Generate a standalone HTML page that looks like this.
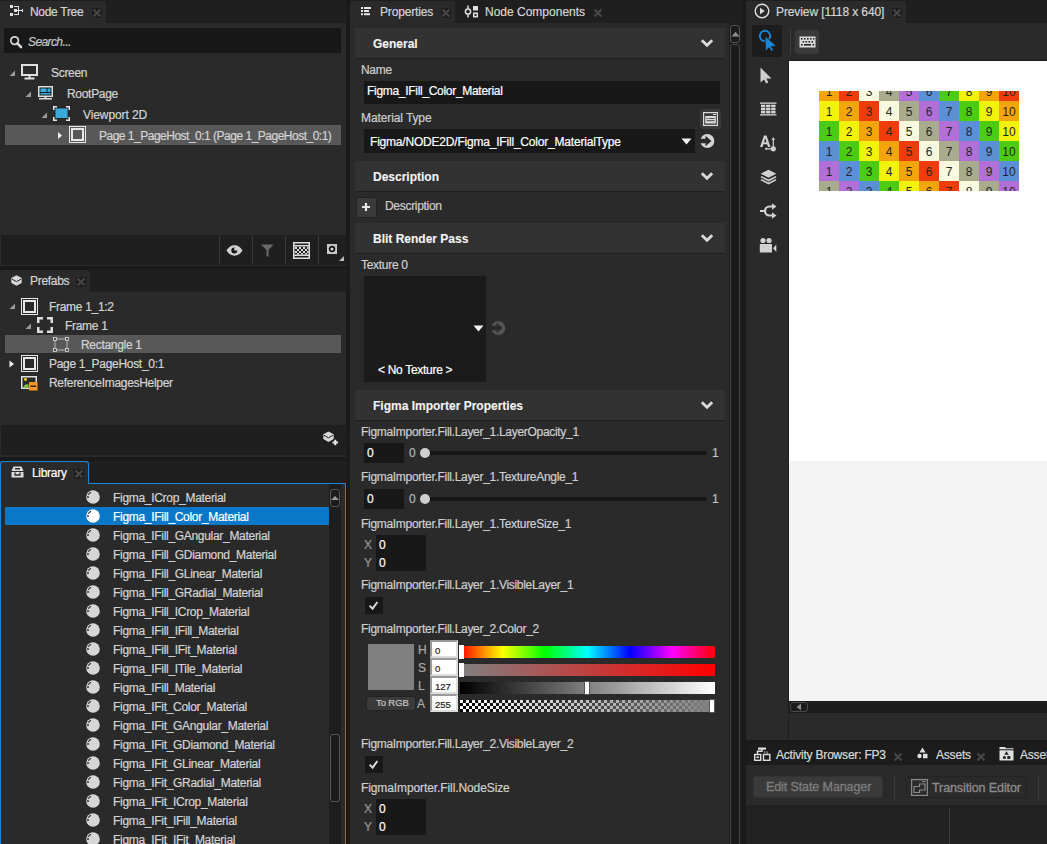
<!DOCTYPE html>
<html><head><meta charset="utf-8">
<style>
*{box-sizing:border-box;margin:0;padding:0}
html,body{width:1047px;height:844px;overflow:hidden;background:#1a1a1a;font-family:"Liberation Sans",sans-serif;font-size:12px;color:#d4d4d4;letter-spacing:-0.3px}
.a{position:absolute}
.t{position:absolute;white-space:pre;line-height:14px;-webkit-text-stroke:0.2px currentColor}
.strip{position:absolute;background:#1f1f1f}
.panel{position:absolute;background:#2a2a2a}
.tab{position:absolute;background:#2a2a2a;border-radius:3px 3px 0 0}
.x{position:absolute;width:10px;height:10px;background:#1e1e1e}
.x:before,.x:after{content:"";position:absolute;left:0px;top:4px;width:10px;height:2.2px;background:#474747;transform:rotate(45deg)}
.x:after{transform:rotate(-45deg)}
.sel{position:absolute;background:#585858}
.hdr{position:absolute;left:5px;width:370px;height:31px;background:#323232;border-bottom:1px solid #1f1f1f}
.hdr .t{left:18px;top:9px;font-weight:bold;color:#f4f4f4;font-size:12px;letter-spacing:0;-webkit-text-stroke:0.1px currentColor}
.chev{position:absolute;right:11px;top:10px;overflow:visible;width:14px;height:9px}
.lbl{position:absolute;white-space:pre;line-height:14px;color:#cfcfcf;left:11px;-webkit-text-stroke:0.2px currentColor}
.inp{position:absolute;background:#181818}
.val{position:absolute;white-space:pre;line-height:14px;color:#fff;-webkit-text-stroke:0.2px currentColor}
.tri{position:absolute;width:0;height:0}
.grid{position:absolute;left:819px;top:91px;width:200px;height:100px;overflow:hidden}
.cell{position:absolute;width:20px;height:20px;text-align:center;font-size:12px;line-height:20px;padding-top:1px;color:#262620;letter-spacing:0}
.lib .t{left:113px;color:#d4d4d4}
.ball{position:absolute;left:85px;width:15px;height:15px;border-radius:50%;background:#d6d6d6}
.ball:after{content:"";position:absolute;left:2px;top:3px;width:4px;height:6px;border-left:1px solid #333;border-radius:50% 0 0 50%}
</style></head><body>

<!-- ============ NODE TREE ============ -->
<div class="strip" style="left:0;top:0;width:346px;height:23px"></div>
<div class="tab" style="left:0;top:1px;width:106px;height:22px"></div>
<div class="panel" style="left:0;top:23px;width:346px;height:243px"></div>
<div class="a" style="left:4px;top:28px;width:337px;height:25px;background:#181818"></div>
<div class="t" style="left:28px;top:35px;font-style:italic;color:#c8c8c8;letter-spacing:-0.6px">Search...</div>
<div class="t" style="left:30px;top:5px;color:#d4d4d4">Node Tree</div>
<div class="x" style="left:92px;top:8px"></div>

<div class="sel" style="left:5px;top:125px;width:336px;height:20px"></div>
<div class="t" style="left:51px;top:66px">Screen</div>
<div class="t" style="left:67px;top:87px">RootPage</div>
<div class="t" style="left:83px;top:108px;letter-spacing:-0.1px">Viewport 2D</div>
<div class="t" style="left:99px;top:129px;letter-spacing:-0.5px">Page 1_PageHost_0:1 (Page 1_PageHost_0:1)</div>

<div class="a" style="left:1px;top:235px;width:345px;height:30px;background:#1f1f1f"></div>
<!-- node tree icons -->
<svg class="a" style="left:9px;top:4px" width="16" height="15" viewBox="0 0 16 15"><g fill="#e0e0e0"><rect x="1" y="1" width="3" height="3"/><rect x="5" y="5" width="3" height="3"/><rect x="1" y="9" width="3" height="3"/><path d="M5 2h5v4h3v-1h1v3h-1v-1h-3v4h-5v-1h4v-3h-1v-1h1v-3h-4z"/></g></svg>
<svg class="a" style="left:9px;top:35px" width="14" height="14" viewBox="0 0 14 14"><circle cx="5.6" cy="5.6" r="3.8" fill="none" stroke="#d8d8d8" stroke-width="1.7"/><path d="M8.3 8.3L12 12" stroke="#d8d8d8" stroke-width="2.6" stroke-linecap="round"/></svg>
<svg class="a" style="left:9px;top:70px" width="7" height="7" viewBox="0 0 7 7"><path d="M6 0.5V6H0.5z" fill="#9a9a9a"/></svg>
<svg class="a" style="left:21px;top:64px" width="17" height="16" viewBox="0 0 17 16"><rect x="1" y="1" width="15" height="10" fill="none" stroke="#e0e0e0" stroke-width="2"/><rect x="7.5" y="11" width="2" height="3" fill="#e0e0e0"/><rect x="3.5" y="13.5" width="10" height="2" fill="#e0e0e0"/></svg>
<svg class="a" style="left:25px;top:91px" width="7" height="7" viewBox="0 0 7 7"><path d="M6 0.5V6H0.5z" fill="#9a9a9a"/></svg>
<svg class="a" style="left:38px;top:86px" width="15" height="14" viewBox="0 0 15 14"><rect x="0.75" y="0.75" width="13.5" height="9.5" fill="#181818" stroke="#e0e0e0" stroke-width="1.5"/><rect x="2.5" y="2.5" width="6" height="3.5" fill="#3ab0e2"/><rect x="9.5" y="2.5" width="3" height="3.5" fill="#3ab0e2"/><rect x="2.5" y="7" width="10" height="1.5" fill="#3ab0e2"/><rect x="6.5" y="10" width="2" height="2" fill="#e0e0e0"/><rect x="1" y="12" width="13" height="1.5" fill="#e0e0e0"/></svg>
<svg class="a" style="left:41px;top:112px" width="7" height="7" viewBox="0 0 7 7"><path d="M6 0.5V6H0.5z" fill="#9a9a9a"/></svg>
<svg class="a" style="left:53px;top:106px" width="17" height="15" viewBox="0 0 17 15"><rect x="2" y="2" width="13" height="10.5" fill="#3aaad8" stroke="#1a1a1a" stroke-width="0.8"/><path d="M0.75 4V0.75H4M13 0.75H16.25V4M16.25 11V14.25H13M4 14.25H0.75V11" fill="none" stroke="#e8e8e8" stroke-width="1.5"/></svg>
<svg class="a" style="left:57px;top:131px" width="6" height="9" viewBox="0 0 6 9"><path d="M1 1V8L5 4.5z" fill="#f0f0f0"/></svg>
<svg class="a" style="left:69px;top:126px" width="17" height="17" viewBox="0 0 17 17"><rect x="0.5" y="0.5" width="16" height="16" fill="none" stroke="#e8e8e8" stroke-width="1"/><rect x="3" y="3" width="11" height="11" fill="none" stroke="#e8e8e8" stroke-width="2"/></svg>
<!-- toolbar -->
<div class="a" style="left:219px;top:236px;width:1px;height:28px;background:#3a3a3a"></div>
<div class="a" style="left:252px;top:236px;width:1px;height:28px;background:#3a3a3a"></div>
<div class="a" style="left:285px;top:236px;width:1px;height:28px;background:#3a3a3a"></div>
<div class="a" style="left:318px;top:236px;width:1px;height:28px;background:#3a3a3a"></div>
<svg class="a" style="left:225.5px;top:244.5px" width="17" height="11" viewBox="0 0 17 11"><path d="M0.5 5.5C3 1.5 6 0.3 8.5 0.3S14 1.5 16.5 5.5C14 9.5 11 10.7 8.5 10.7S3 9.5 0.5 5.5z" fill="#d0d0d0"/><circle cx="8.3" cy="5.6" r="3" fill="#161616"/><path d="M8.3 5.6V2.2A3.4 3.4 0 0 1 11.7 5.6z" fill="#d0d0d0"/></svg>
<svg class="a" style="left:261px;top:244px" width="13" height="13" viewBox="0 0 13 13"><path d="M0 0.5H12.5L7.5 6V12.5H5.5V6z" fill="#6a6a6a"/></svg>
<svg class="a" style="left:293px;top:242px" width="17" height="17" viewBox="0 0 17 17"><rect x="0.75" y="0.75" width="15.5" height="15.5" fill="none" stroke="#dcdcdc" stroke-width="1.5"/><rect x="1" y="3" width="15" height="1.5" fill="#dcdcdc"/><rect x="1" y="12.5" width="15" height="1.5" fill="#dcdcdc"/><g fill="#dcdcdc"><rect x="2" y="5" width="2" height="2"/><rect x="6" y="5" width="2" height="2"/><rect x="10" y="5" width="2" height="2"/><rect x="14" y="5" width="1.5" height="2"/><rect x="4" y="7" width="2" height="2"/><rect x="8" y="7" width="2" height="2"/><rect x="12" y="7" width="2" height="2"/><rect x="2" y="9" width="2" height="2"/><rect x="6" y="9" width="2" height="2"/><rect x="10" y="9" width="2" height="2"/><rect x="14" y="9" width="1.5" height="2"/><rect x="4" y="11" width="2" height="1.5"/><rect x="8" y="11" width="2" height="1.5"/><rect x="12" y="11" width="2" height="1.5"/></g></svg>
<svg class="a" style="left:327px;top:244px" width="10" height="10" viewBox="0 0 10 10"><rect x="0" y="0" width="10" height="10" fill="#dcdcdc"/><rect x="1" y="1" width="8" height="8" fill="none" stroke="#9a9a9a" stroke-width="0.6"/><circle cx="5" cy="5" r="2.4" fill="none" stroke="#111" stroke-width="1.7"/></svg>
<svg class="a" style="left:339px;top:256px" width="5" height="5" viewBox="0 0 5 5"><path d="M5 0V5H0z" fill="#bdbdbd"/></svg>


<!-- ============ PREFABS ============ -->
<div class="strip" style="left:0;top:270px;width:346px;height:22px"></div>
<div class="tab" style="left:0;top:270px;width:90px;height:22px"></div>
<div class="panel" style="left:0;top:292px;width:346px;height:165px"></div>
<div class="t" style="left:30px;top:274px">Prefabs</div>
<div class="x" style="left:76px;top:277px"></div>
<div class="sel" style="left:5px;top:335px;width:336px;height:18px"></div>
<div class="t" style="left:49px;top:300px">Frame 1_1:2</div>
<div class="t" style="left:65px;top:319px">Frame 1</div>
<div class="t" style="left:81px;top:338px">Rectangle 1</div>
<div class="t" style="left:49px;top:357px">Page 1_PageHost_0:1</div>
<div class="t" style="left:49px;top:376px">ReferenceImagesHelper</div>
<div class="a" style="left:1px;top:425px;width:345px;height:30px;background:#1f1f1f"></div>
<!-- prefabs icons -->
<svg class="a" style="left:11px;top:275px" width="11" height="11" viewBox="0 0 11 11"><path d="M5.5 0.3L10.7 3.1V7.9L5.5 10.7L0.3 7.9V3.1z" fill="#d8d8d8"/><path d="M0.8 4L5.5 6.6L10.2 4" fill="none" stroke="#2a2a2a" stroke-width="1"/></svg>
<svg class="a" style="left:9px;top:303px" width="7" height="7" viewBox="0 0 7 7"><path d="M6 0.5V6H0.5z" fill="#9a9a9a"/></svg>
<svg class="a" style="left:21px;top:298px" width="17" height="17" viewBox="0 0 17 17"><rect x="0.5" y="0.5" width="16" height="16" fill="none" stroke="#e8e8e8" stroke-width="1"/><rect x="3" y="3" width="11" height="11" fill="none" stroke="#e8e8e8" stroke-width="2"/></svg>
<svg class="a" style="left:25px;top:323px" width="7" height="7" viewBox="0 0 7 7"><path d="M6 0.5V6H0.5z" fill="#9a9a9a"/></svg>
<svg class="a" style="left:37px;top:317px" width="16" height="16" viewBox="0 0 16 16"><path d="M1.25 6V1.25H6M10 1.25H14.75V6M14.75 10V14.75H10M6 14.75H1.25V10" fill="none" stroke="#dcdcdc" stroke-width="2.5"/></svg>
<svg class="a" style="left:53px;top:337px" width="16" height="15" viewBox="0 0 16 15"><rect x="2" y="2" width="12" height="11" fill="none" stroke="#cfcfcf" stroke-width="0.8"/><g fill="#4a4a4a" stroke="#e0e0e0" stroke-width="0.8"><rect x="0.5" y="0.5" width="3" height="3"/><rect x="12.5" y="0.5" width="3" height="3"/><rect x="0.5" y="11.5" width="3" height="3"/><rect x="12.5" y="11.5" width="3" height="3"/></g></svg>
<svg class="a" style="left:9px;top:360px" width="6" height="8" viewBox="0 0 6 8"><path d="M0.5 0.5V7.5L5 4z" fill="#f0f0f0"/></svg>
<svg class="a" style="left:21px;top:355px" width="17" height="17" viewBox="0 0 17 17"><rect x="0.5" y="0.5" width="16" height="16" fill="none" stroke="#e8e8e8" stroke-width="1"/><rect x="3" y="3" width="11" height="11" fill="none" stroke="#e8e8e8" stroke-width="2"/></svg>
<svg class="a" style="left:21px;top:376px" width="17" height="15" viewBox="0 0 17 15"><path d="M8 12.25H0.75V0.75H15.25V6" fill="none" stroke="#e0e0e0" stroke-width="1.5"/><circle cx="4.5" cy="3.5" r="1.4" fill="#f2e020"/><path d="M2 11.5C3 9 5 7.5 7.5 8.5V11.5z" fill="#7ccb3a"/><rect x="8" y="6" width="8.5" height="8.5" fill="#f5962a"/><rect x="9.5" y="9.5" width="5.5" height="1.4" fill="#1a1a1a"/></svg>
<svg class="a" style="left:323px;top:431px" width="16" height="16" viewBox="0 0 16 16"><path d="M5.5 0.5L10.7 3.3V8.1L5.5 10.9L0.3 8.1V3.3z" fill="#d8d8d8"/><path d="M0.8 4.2L5.5 6.8L10.2 4.2" fill="none" stroke="#1f1f1f" stroke-width="1"/><path d="M9 11.5H15.5M12.25 8.25V14.75" stroke="#1f1f1f" stroke-width="3.5"/><path d="M9.5 11.5H15M12.25 8.75V14.25" stroke="#e8e8e8" stroke-width="2"/></svg>


<!-- ============ LIBRARY ============ -->
<div class="strip" style="left:0;top:461px;width:346px;height:22px"></div>
<div class="a" style="left:0;top:461px;width:89px;height:23px;background:#2a2a2a;border:1px solid #1a87d8;border-bottom:none;border-radius:3px 3px 0 0"></div>
<div class="a" style="left:0;top:483px;width:346px;height:362px;background:#2a2a2a;border:1px solid #1a87d8;border-top:none;border-bottom:none"></div>
<div class="a" style="left:88px;top:483px;width:258px;height:1px;background:#1a87d8"></div>

<svg class="a" style="left:11px;top:466px" width="13" height="12" viewBox="0 0 13 12"><path d="M2.5 0.5H10.5L12.5 5H0.5z" fill="#dcdcdc"/><rect x="4" y="2" width="5" height="1.5" fill="#2a2a2a"/><rect x="0.5" y="6" width="12" height="5.5" fill="#dcdcdc"/><path d="M4 6.5V9H9V6.5" fill="none" stroke="#2a2a2a" stroke-width="1.3"/></svg>
<div class="t" style="left:32px;top:466px;color:#fff">Library</div>
<div class="x" style="left:74px;top:469px"></div>

<div class="lib">
<div class="a" style="left:5px;top:507px;width:324px;height:18px;background:#0a78c8"></div>
<svg class="a" style="left:86px;top:490.0px" width="14" height="14" viewBox="0 0 14 14"><circle cx="7" cy="7" r="6.8" fill="#d6d6d6"/><path d="M5 2.2A5.2 5.2 0 0 0 2.3 4.8" fill="none" stroke="#222" stroke-width="1.1"/><circle cx="2" cy="7" r="0.9" fill="#222"/></svg><div class="t" style="top:490.5px;color:#d4d4d4">Figma_ICrop_Material</div>
<svg class="a" style="left:86px;top:509.0px" width="14" height="14" viewBox="0 0 14 14"><circle cx="7" cy="7" r="6.8" fill="#fff"/><path d="M5 2.2A5.2 5.2 0 0 0 2.3 4.8" fill="none" stroke="#222" stroke-width="1.1"/><circle cx="2" cy="7" r="0.9" fill="#222"/></svg><div class="t" style="top:509.5px;color:#fff">Figma_IFill_Color_Material</div>
<svg class="a" style="left:86px;top:528.0px" width="14" height="14" viewBox="0 0 14 14"><circle cx="7" cy="7" r="6.8" fill="#d6d6d6"/><path d="M5 2.2A5.2 5.2 0 0 0 2.3 4.8" fill="none" stroke="#222" stroke-width="1.1"/><circle cx="2" cy="7" r="0.9" fill="#222"/></svg><div class="t" style="top:528.5px;color:#d4d4d4">Figma_IFill_GAngular_Material</div>
<svg class="a" style="left:86px;top:547.0px" width="14" height="14" viewBox="0 0 14 14"><circle cx="7" cy="7" r="6.8" fill="#d6d6d6"/><path d="M5 2.2A5.2 5.2 0 0 0 2.3 4.8" fill="none" stroke="#222" stroke-width="1.1"/><circle cx="2" cy="7" r="0.9" fill="#222"/></svg><div class="t" style="top:547.5px;color:#d4d4d4">Figma_IFill_GDiamond_Material</div>
<svg class="a" style="left:86px;top:566.0px" width="14" height="14" viewBox="0 0 14 14"><circle cx="7" cy="7" r="6.8" fill="#d6d6d6"/><path d="M5 2.2A5.2 5.2 0 0 0 2.3 4.8" fill="none" stroke="#222" stroke-width="1.1"/><circle cx="2" cy="7" r="0.9" fill="#222"/></svg><div class="t" style="top:566.5px;color:#d4d4d4">Figma_IFill_GLinear_Material</div>
<svg class="a" style="left:86px;top:585.0px" width="14" height="14" viewBox="0 0 14 14"><circle cx="7" cy="7" r="6.8" fill="#d6d6d6"/><path d="M5 2.2A5.2 5.2 0 0 0 2.3 4.8" fill="none" stroke="#222" stroke-width="1.1"/><circle cx="2" cy="7" r="0.9" fill="#222"/></svg><div class="t" style="top:585.5px;color:#d4d4d4">Figma_IFill_GRadial_Material</div>
<svg class="a" style="left:86px;top:604.0px" width="14" height="14" viewBox="0 0 14 14"><circle cx="7" cy="7" r="6.8" fill="#d6d6d6"/><path d="M5 2.2A5.2 5.2 0 0 0 2.3 4.8" fill="none" stroke="#222" stroke-width="1.1"/><circle cx="2" cy="7" r="0.9" fill="#222"/></svg><div class="t" style="top:604.5px;color:#d4d4d4">Figma_IFill_ICrop_Material</div>
<svg class="a" style="left:86px;top:623.0px" width="14" height="14" viewBox="0 0 14 14"><circle cx="7" cy="7" r="6.8" fill="#d6d6d6"/><path d="M5 2.2A5.2 5.2 0 0 0 2.3 4.8" fill="none" stroke="#222" stroke-width="1.1"/><circle cx="2" cy="7" r="0.9" fill="#222"/></svg><div class="t" style="top:623.5px;color:#d4d4d4">Figma_IFill_IFill_Material</div>
<svg class="a" style="left:86px;top:642.0px" width="14" height="14" viewBox="0 0 14 14"><circle cx="7" cy="7" r="6.8" fill="#d6d6d6"/><path d="M5 2.2A5.2 5.2 0 0 0 2.3 4.8" fill="none" stroke="#222" stroke-width="1.1"/><circle cx="2" cy="7" r="0.9" fill="#222"/></svg><div class="t" style="top:642.5px;color:#d4d4d4">Figma_IFill_IFit_Material</div>
<svg class="a" style="left:86px;top:661.0px" width="14" height="14" viewBox="0 0 14 14"><circle cx="7" cy="7" r="6.8" fill="#d6d6d6"/><path d="M5 2.2A5.2 5.2 0 0 0 2.3 4.8" fill="none" stroke="#222" stroke-width="1.1"/><circle cx="2" cy="7" r="0.9" fill="#222"/></svg><div class="t" style="top:661.5px;color:#d4d4d4">Figma_IFill_ITile_Material</div>
<svg class="a" style="left:86px;top:680.0px" width="14" height="14" viewBox="0 0 14 14"><circle cx="7" cy="7" r="6.8" fill="#d6d6d6"/><path d="M5 2.2A5.2 5.2 0 0 0 2.3 4.8" fill="none" stroke="#222" stroke-width="1.1"/><circle cx="2" cy="7" r="0.9" fill="#222"/></svg><div class="t" style="top:680.5px;color:#d4d4d4">Figma_IFill_Material</div>
<svg class="a" style="left:86px;top:699.0px" width="14" height="14" viewBox="0 0 14 14"><circle cx="7" cy="7" r="6.8" fill="#d6d6d6"/><path d="M5 2.2A5.2 5.2 0 0 0 2.3 4.8" fill="none" stroke="#222" stroke-width="1.1"/><circle cx="2" cy="7" r="0.9" fill="#222"/></svg><div class="t" style="top:699.5px;color:#d4d4d4">Figma_IFit_Color_Material</div>
<svg class="a" style="left:86px;top:718.0px" width="14" height="14" viewBox="0 0 14 14"><circle cx="7" cy="7" r="6.8" fill="#d6d6d6"/><path d="M5 2.2A5.2 5.2 0 0 0 2.3 4.8" fill="none" stroke="#222" stroke-width="1.1"/><circle cx="2" cy="7" r="0.9" fill="#222"/></svg><div class="t" style="top:718.5px;color:#d4d4d4">Figma_IFit_GAngular_Material</div>
<svg class="a" style="left:86px;top:737.0px" width="14" height="14" viewBox="0 0 14 14"><circle cx="7" cy="7" r="6.8" fill="#d6d6d6"/><path d="M5 2.2A5.2 5.2 0 0 0 2.3 4.8" fill="none" stroke="#222" stroke-width="1.1"/><circle cx="2" cy="7" r="0.9" fill="#222"/></svg><div class="t" style="top:737.5px;color:#d4d4d4">Figma_IFit_GDiamond_Material</div>
<svg class="a" style="left:86px;top:756.0px" width="14" height="14" viewBox="0 0 14 14"><circle cx="7" cy="7" r="6.8" fill="#d6d6d6"/><path d="M5 2.2A5.2 5.2 0 0 0 2.3 4.8" fill="none" stroke="#222" stroke-width="1.1"/><circle cx="2" cy="7" r="0.9" fill="#222"/></svg><div class="t" style="top:756.5px;color:#d4d4d4">Figma_IFit_GLinear_Material</div>
<svg class="a" style="left:86px;top:775.0px" width="14" height="14" viewBox="0 0 14 14"><circle cx="7" cy="7" r="6.8" fill="#d6d6d6"/><path d="M5 2.2A5.2 5.2 0 0 0 2.3 4.8" fill="none" stroke="#222" stroke-width="1.1"/><circle cx="2" cy="7" r="0.9" fill="#222"/></svg><div class="t" style="top:775.5px;color:#d4d4d4">Figma_IFit_GRadial_Material</div>
<svg class="a" style="left:86px;top:794.0px" width="14" height="14" viewBox="0 0 14 14"><circle cx="7" cy="7" r="6.8" fill="#d6d6d6"/><path d="M5 2.2A5.2 5.2 0 0 0 2.3 4.8" fill="none" stroke="#222" stroke-width="1.1"/><circle cx="2" cy="7" r="0.9" fill="#222"/></svg><div class="t" style="top:794.5px;color:#d4d4d4">Figma_IFit_ICrop_Material</div>
<svg class="a" style="left:86px;top:813.0px" width="14" height="14" viewBox="0 0 14 14"><circle cx="7" cy="7" r="6.8" fill="#d6d6d6"/><path d="M5 2.2A5.2 5.2 0 0 0 2.3 4.8" fill="none" stroke="#222" stroke-width="1.1"/><circle cx="2" cy="7" r="0.9" fill="#222"/></svg><div class="t" style="top:813.5px;color:#d4d4d4">Figma_IFit_IFill_Material</div>
<svg class="a" style="left:86px;top:832.0px" width="14" height="14" viewBox="0 0 14 14"><circle cx="7" cy="7" r="6.8" fill="#d6d6d6"/><path d="M5 2.2A5.2 5.2 0 0 0 2.3 4.8" fill="none" stroke="#222" stroke-width="1.1"/><circle cx="2" cy="7" r="0.9" fill="#222"/></svg><div class="t" style="top:832.5px;color:#d4d4d4">Figma_IFit_IFit_Material</div>
</div>
<div class="a" style="left:329px;top:484px;width:12px;height:360px;background:#1e1e1e"></div>
<div class="a" style="left:330px;top:489px;width:10px;height:18px;border:1px solid #585858;border-radius:3px;background:#1b1b1b"></div>
<div class="tri" style="left:331px;top:496px;border-left:4px solid transparent;border-right:4px solid transparent;border-bottom:4px solid #999"></div>
<div class="a" style="left:330px;top:734px;width:10px;height:68px;border:1px solid #585858;border-radius:3px;background:#1b1b1b"></div>

<!-- ============ PROPERTIES ============ -->
<div class="strip" style="left:350px;top:0;width:392px;height:23px"></div>
<div class="tab" style="left:350px;top:1px;width:105px;height:22px"></div>
<div class="panel" style="left:350px;top:23px;width:392px;height:821px"></div>
<div class="t" style="left:380px;top:5px;letter-spacing:-0.15px">Properties</div>
<div class="x" style="left:441px;top:8px"></div>
<div class="t" style="left:485px;top:5px;letter-spacing:0px">Node Components</div>
<div class="x" style="left:593px;top:8px"></div>


<!-- props content -->
<div class="hdr" style="left:355px;top:28px"><div class="t">General</div><svg class="chev" viewBox="0 0 14 9"><path d="M1.8 2.2L7 7.2L12.2 2.2" fill="none" stroke="#dadada" stroke-width="2.9"/></svg></div>
<div class="lbl" style="left:361px;top:63px">Name</div>
<div class="inp" style="left:364px;top:81px;width:356px;height:23px"></div>
<div class="val" style="left:367px;top:84px">Figma_IFill_Color_Material</div>
<div class="lbl" style="left:361px;top:111px;letter-spacing:-0.1px">Material Type</div>
<div class="inp" style="left:364px;top:129px;width:331px;height:24px"></div>
<div class="val" style="left:370px;top:135px;letter-spacing:-0.2px">Figma/NODE2D/Figma_IFill_Color_MaterialType</div>
<div class="hdr" style="left:355px;top:161px"><div class="t">Description</div><svg class="chev" viewBox="0 0 14 9"><path d="M1.8 2.2L7 7.2L12.2 2.2" fill="none" stroke="#dadada" stroke-width="2.9"/></svg></div>
<div class="a" style="left:356px;top:197px;width:21px;height:21px;background:#3a3a3a;border-radius:3px;border:1px solid #222"></div>
<div class="lbl" style="left:385px;top:199px">Description</div>
<div class="hdr" style="left:355px;top:223px"><div class="t">Blit Render Pass</div><svg class="chev" viewBox="0 0 14 9"><path d="M1.8 2.2L7 7.2L12.2 2.2" fill="none" stroke="#dadada" stroke-width="2.9"/></svg></div>
<div class="lbl" style="left:361px;top:258px">Texture 0</div>
<div class="inp" style="left:364px;top:276px;width:122px;height:106px;background:#1b1b1b"></div>
<div class="val" style="left:378px;top:363px">&lt; No Texture &gt;</div>
<div class="hdr" style="left:355px;top:390px"><div class="t">Figma Importer Properties</div><svg class="chev" viewBox="0 0 14 9"><path d="M1.8 2.2L7 7.2L12.2 2.2" fill="none" stroke="#dadada" stroke-width="2.9"/></svg></div>
<div class="lbl" style="left:361px;top:425px">FigmaImporter.Fill.Layer_1.LayerOpacity_1</div>
<div class="inp" style="left:364px;top:443px;width:40px;height:20px"></div>
<div class="val" style="left:367px;top:446px">0</div>
<div class="lbl" style="left:409px;top:446px;color:#b4b4b4">0</div>
<div class="a" style="left:425px;top:451px;width:282px;height:4px;background:#171717;border-radius:2px"></div>
<div class="a" style="left:420px;top:448px;width:10px;height:10px;border-radius:50%;background:#d0d0d0"></div>
<div class="lbl" style="left:712px;top:446px;color:#c4c4c4">1</div>
<div class="lbl" style="left:361px;top:470px">FigmaImporter.Fill.Layer_1.TextureAngle_1</div>
<div class="inp" style="left:364px;top:489px;width:40px;height:20px"></div>
<div class="val" style="left:367px;top:492px">0</div>
<div class="lbl" style="left:409px;top:492px;color:#b4b4b4">0</div>
<div class="a" style="left:425px;top:497px;width:282px;height:4px;background:#171717;border-radius:2px"></div>
<div class="a" style="left:420px;top:494px;width:10px;height:10px;border-radius:50%;background:#d0d0d0"></div>
<div class="lbl" style="left:712px;top:492px;color:#c4c4c4">1</div>
<div class="lbl" style="left:361px;top:517px">FigmaImporter.Fill.Layer_1.TextureSize_1</div>
<div class="inp" style="left:376px;top:535px;width:50px;height:36px"></div>
<div class="lbl" style="left:364px;top:538px;color:#999">X</div>
<div class="lbl" style="left:364px;top:556px;color:#999">Y</div>
<div class="val" style="left:379px;top:538px">0</div>
<div class="val" style="left:379px;top:556px">0</div>
<div class="lbl" style="left:361px;top:578px">FigmaImporter.Fill.Layer_1.VisibleLayer_1</div>
<div class="inp" style="left:365px;top:597px;width:18px;height:17px;background:#181818"></div>
<svg class="a" style="left:368px;top:600px" width="12" height="11" viewBox="0 0 12 11"><path d="M1.6 5.6L4.6 8.6L9.4 2" fill="none" stroke="#d8d8d8" stroke-width="2"/></svg>
<div class="lbl" style="left:361px;top:622px">FigmaImporter.Fill.Layer_2.Color_2</div>
<div class="a" style="left:368px;top:644px;width:46px;height:46px;background:#808080"></div>
<div class="a" style="left:366px;top:696px;width:50px;height:15px;background:#3a3a3a;border:1px solid #242424;border-radius:3px"></div>
<div class="t" style="left:376px;top:697px;font-size:9.5px;line-height:12px;color:#c8c8c8;letter-spacing:-0.1px">To RGB</div>
<div class="lbl" style="left:418px;top:643px;color:#aaa">H</div>
<div class="lbl" style="left:418px;top:661px;color:#aaa">S</div>
<div class="lbl" style="left:418px;top:679px;color:#aaa">L</div>
<div class="lbl" style="left:417px;top:697px;color:#aaa">A</div>
<div class="a" style="left:430px;top:640px;width:28px;height:18px;background:#fff;border:2px solid #9a9a9a;border-right-color:#ddd;border-bottom-color:#ddd"></div>
<div class="a" style="left:430px;top:658px;width:28px;height:18px;background:#fff;border:2px solid #9a9a9a;border-right-color:#ddd;border-bottom-color:#ddd"></div>
<div class="a" style="left:430px;top:676px;width:28px;height:18px;background:#fff;border:2px solid #9a9a9a;border-right-color:#ddd;border-bottom-color:#ddd"></div>
<div class="a" style="left:430px;top:694px;width:28px;height:18px;background:#fff;border:2px solid #9a9a9a;border-right-color:#ddd;border-bottom-color:#ddd"></div>
<div class="t" style="left:435px;top:645px;font-size:9.5px;line-height:12px;color:#222;letter-spacing:0">0</div>
<div class="t" style="left:435px;top:663px;font-size:9.5px;line-height:12px;color:#222;letter-spacing:0">0</div>
<div class="t" style="left:435px;top:681px;font-size:9.5px;line-height:12px;color:#222;letter-spacing:0">127</div>
<div class="t" style="left:435px;top:699px;font-size:9.5px;line-height:12px;color:#222;letter-spacing:0">255</div>
<div class="a" style="left:460px;top:646px;width:255px;height:12px;background:linear-gradient(to right,#f00 0%,#ff0 16.7%,#0f0 33.3%,#0ff 50%,#00f 66.7%,#f0f 83.3%,#f00 100%)"></div>
<div class="a" style="left:460px;top:664px;width:255px;height:12px;background:linear-gradient(to right,#808080,#f00)"></div>
<div class="a" style="left:460px;top:682px;width:255px;height:12px;background:linear-gradient(to right,#000,#808080 50%,#fff)"></div>
<div class="a" style="left:460px;top:700px;width:255px;height:12px;background-color:#fff;background-image:linear-gradient(to right,rgba(128,128,128,0),rgba(128,128,128,1)),repeating-conic-gradient(#000 0 25%,#fff 0 50%);background-size:100% 100%,6px 6px"></div>
<div class="a" style="left:459px;top:645px;width:5px;height:14px;background:#fff"></div>
<div class="a" style="left:459px;top:663px;width:5px;height:14px;background:#fff"></div>
<div class="a" style="left:584px;top:681px;width:6px;height:14px;background:#fff;border:1px solid #555"></div>
<div class="a" style="left:709px;top:699px;width:6px;height:14px;background:#fff;border:1px solid #555"></div>
<div class="lbl" style="left:361px;top:737px">FigmaImporter.Fill.Layer_2.VisibleLayer_2</div>
<div class="inp" style="left:365px;top:756px;width:18px;height:17px;background:#181818"></div>
<svg class="a" style="left:368px;top:759px" width="12" height="11" viewBox="0 0 12 11"><path d="M1.6 5.6L4.6 8.6L9.4 2" fill="none" stroke="#d8d8d8" stroke-width="2"/></svg>
<div class="lbl" style="left:361px;top:781px;letter-spacing:-0.1px">FigmaImporter.Fill.NodeSize</div>
<div class="inp" style="left:376px;top:799px;width:50px;height:36px"></div>
<div class="lbl" style="left:364px;top:802px;color:#999">X</div>
<div class="lbl" style="left:364px;top:820px;color:#999">Y</div>
<div class="val" style="left:379px;top:802px">0</div>
<div class="val" style="left:379px;top:820px">0</div>
<!-- scrollbar -->
<div class="a" style="left:729px;top:23px;width:13px;height:821px;background:#1e1e1e"></div>
<div class="a" style="left:730px;top:25px;width:10px;height:18px;border:1px solid #555;border-radius:3px;background:#1b1b1b"></div>
<div class="a" style="left:730px;top:44px;width:10px;height:810px;border:1px solid #444;border-radius:3px;background:#1b1b1b"></div>


<svg class="a" style="left:360px;top:6px" width="12" height="10" viewBox="0 0 12 10"><g fill="#e6e6e6"><rect x="1" y="1" width="2" height="2"/><rect x="1" y="4" width="2" height="2"/><rect x="1" y="7.2" width="2" height="2"/><rect x="4" y="1" width="7" height="2"/><rect x="4" y="4" width="5" height="2"/><rect x="4" y="7.2" width="6" height="2"/></g></svg>
<svg class="a" style="left:464px;top:5px" width="15" height="13" viewBox="0 0 15 13"><g fill="none" stroke="#e0e0e0" stroke-width="1.5"><circle cx="4" cy="6.5" r="2.6"/><path d="M4 0.5V3.6M4 9.4V12.5"/><rect x="9.75" y="8.2" width="3.5" height="3.5"/></g><rect x="9" y="1" width="5" height="4.5" fill="#e0e0e0"/></svg>
<svg class="a" style="left:361px;top:202px" width="10" height="10" viewBox="0 0 10 10"><path d="M1 5H9M5 1V9" stroke="#e6e6e6" stroke-width="2.2"/></svg>
<div class="a" style="left:700px;top:109px;width:21px;height:20px;background:#3a3a3a;border-radius:3px"></div>
<svg class="a" style="left:703px;top:112px" width="15" height="14" viewBox="0 0 15 14"><rect x="0.6" y="0.6" width="13.8" height="12.8" fill="none" stroke="#dadada" stroke-width="1.2"/><rect x="2.2" y="4" width="10.6" height="7.5" fill="#dadada"/><rect x="10" y="2" width="3" height="1" fill="#dadada"/><g fill="#3a3a3a"><rect x="3.5" y="6" width="1.5" height="0.9"/><rect x="6" y="6" width="5.5" height="0.9"/><rect x="3.5" y="8.3" width="8" height="0.9"/></g></svg>
<svg class="a" style="left:681px;top:138px" width="11" height="7" viewBox="0 0 11 7"><path d="M0.5 0.5H10.5L5.5 6.5z" fill="#f4f4f4"/></svg>
<svg class="a" style="left:700px;top:133px" width="15" height="16" viewBox="0 0 15 16"><circle cx="7.3" cy="8" r="7" fill="#d6d6d6"/><path d="M0 5.8H5.5V2.8L11.5 8L5.5 13.2V10.2H0z" fill="#2a2a2a"/></svg>
<svg class="a" style="left:473px;top:325px" width="11" height="7" viewBox="0 0 11 7"><path d="M0.5 0.5H10.5L5.5 6.5z" fill="#f4f4f4"/></svg>
<svg class="a" style="left:491px;top:320px" width="15" height="16" viewBox="0 0 15 16"><circle cx="7.3" cy="8" r="7" fill="#555"/><path d="M0 5.8H5.5V2.8L11.5 8L5.5 13.2V10.2H0z" fill="#2a2a2a"/></svg>
<svg class="a" style="left:731px;top:31px" width="9" height="6" viewBox="0 0 9 6"><path d="M0.5 5.5L4.5 0.8L8.5 5.5z" fill="#8c8c8c"/></svg>

<!-- ============ PREVIEW ============ -->
<div class="strip" style="left:746px;top:0;width:301px;height:23px"></div>
<div class="tab" style="left:746px;top:1px;width:160px;height:22px"></div>
<div class="panel" style="left:746px;top:23px;width:301px;height:717px"></div>
<div class="t" style="left:776px;top:5px;letter-spacing:-0.1px">Preview [1118 x 640]</div>
<div class="x" style="left:892px;top:8px"></div>
<div class="a" style="left:788px;top:60px;width:259px;height:1px;background:#1a1a1a"></div>
<div class="a" style="left:788px;top:60px;width:1px;height:680px;background:#1f1f1f"></div>
<div class="a" style="left:789px;top:61px;width:258px;height:400px;background:#fff"></div>
<div class="a" style="left:789px;top:461px;width:258px;height:240px;background:#f3f3f3"></div>
<div class="a" style="left:789px;top:701px;width:258px;height:12px;background:#1c1c1c"></div>

<!-- preview icons -->
<svg class="a" style="left:754px;top:3px" width="16" height="16" viewBox="0 0 16 16"><circle cx="8" cy="8" r="6.8" fill="none" stroke="#dedede" stroke-width="1.4"/><path d="M6 4.8V11.2L10.8 8z" fill="#dedede"/></svg>
<div class="a" style="left:752px;top:25px;width:30px;height:32px;background:#1c1c1c;border-radius:3px"></div>
<svg class="a" style="left:757px;top:28px" width="21" height="24" viewBox="0 0 21 24"><circle cx="8" cy="8" r="5.2" fill="none" stroke="#1a86d8" stroke-width="1.9"/><path d="M8 8L8.6 23.2L12.1 19.7L14.5 23.4L16.6 22.1L14.3 18.5L19.4 18Z" fill="#1a86d8" stroke="#1c1c1c" stroke-width="0.8"/></svg>
<div class="a" style="left:790px;top:29px;width:1px;height:25px;background:#3c3c3c"></div>
<div class="a" style="left:795px;top:30px;width:24px;height:24px;background:#3a3a3a;border-radius:3px"></div>
<svg class="a" style="left:799px;top:36px" width="17" height="12" viewBox="0 0 17 12"><rect x="0.5" y="0.5" width="16" height="11" fill="#dadada"/><g fill="#222"><rect x="2" y="2" width="1.6" height="1.6"/><rect x="5" y="2" width="1.6" height="1.6"/><rect x="8" y="2" width="1.6" height="1.6"/><rect x="11" y="2" width="1.6" height="1.6"/><rect x="14" y="2" width="1.4" height="1.6"/><rect x="3.5" y="5" width="1.6" height="1.6"/><rect x="6.5" y="5" width="1.6" height="1.6"/><rect x="9.5" y="5" width="1.6" height="1.6"/><rect x="12.5" y="5" width="1.6" height="1.6"/><rect x="2" y="8" width="1.6" height="1.6"/><rect x="5" y="8" width="7" height="1.6"/><rect x="13.5" y="8" width="1.6" height="1.6"/></g></svg>
<svg class="a" style="left:760px;top:67px" width="13" height="17" viewBox="0 0 13 17"><path d="M0.5 0.5V15.5L4 12.5L6.2 16.5L8.3 15.5L6.4 11.6H11.5z" fill="#cfcfcf"/></svg>
<svg class="a" style="left:760px;top:102px" width="17" height="14" viewBox="0 0 17 14"><g fill="#d4d4d4"><rect x="0" y="0.5" width="16.5" height="1.3"/><rect x="0" y="12.2" width="16.5" height="1.3"/><rect x="1" y="2.7" width="4.3" height="2.5"/><rect x="6.1" y="2.7" width="4.3" height="2.5"/><rect x="11.2" y="2.7" width="4.3" height="2.5"/><rect x="1" y="5.8" width="4.3" height="2.5"/><rect x="6.1" y="5.8" width="4.3" height="2.5"/><rect x="11.2" y="5.8" width="4.3" height="2.5"/><rect x="1" y="8.9" width="4.3" height="2.5"/><rect x="6.1" y="8.9" width="4.3" height="2.5"/><rect x="11.2" y="8.9" width="4.3" height="2.5"/></g></svg>
<svg class="a" style="left:759px;top:134px" width="18" height="19" viewBox="0 0 18 19"><path d="M1 13L5 1.5H7.5L11.5 13H9L8.1 10.2H4.4L3.5 13zM5 8.2H7.5L6.25 4.2z" fill="#d0d0d0"/><path d="M14.3 4V14.8M6.5 14.8H14" stroke="#d0d0d0" stroke-width="1.2" fill="none"/><path d="M14.3 3L12.6 6H16z" fill="#d0d0d0"/><path d="M5.5 14.8L8 13.3V16.3z" fill="#d0d0d0"/><circle cx="14.3" cy="14.8" r="2.6" fill="#d0d0d0"/></svg>
<svg class="a" style="left:760px;top:169px" width="17" height="16" viewBox="0 0 17 16"><path d="M8.5 0.7L16.3 4.7L8.5 8.7L0.7 4.7z" fill="#d2d2d2"/><path d="M0.9 7.6L8.5 11.5L16.1 7.6M0.9 10.6L8.5 14.5L16.1 10.6" fill="none" stroke="#d2d2d2" stroke-width="1.6"/></svg>
<svg class="a" style="left:760px;top:203px" width="17" height="16" viewBox="0 0 17 16"><path d="M0 8H4.5" stroke="#d2d2d2" stroke-width="2"/><path d="M13 3.5H9.5A4.5 4.5 0 0 0 9.5 12.5H13" fill="none" stroke="#d2d2d2" stroke-width="2.2"/><path d="M12 0.3L16.5 3.5L12 6.7zM12 9.3L16.5 12.5L12 15.7z" fill="#d2d2d2"/></svg>
<svg class="a" style="left:759px;top:237px" width="18" height="17" viewBox="0 0 18 17"><circle cx="4" cy="3.5" r="2.6" fill="#d2d2d2"/><circle cx="10" cy="3.5" r="2.6" fill="#d2d2d2"/><rect x="0.8" y="7" width="12.2" height="8.5" fill="#d2d2d2"/><path d="M14 11.2L17.3 7.5V15z" fill="#d2d2d2"/></svg>
<div class="a" style="left:790px;top:702px;width:18px;height:10px;border:1px solid #4a4a4a;border-radius:3px;background:#1b1b1b"></div>
<svg class="a" style="left:795px;top:703px" width="8" height="8" viewBox="0 0 8 8"><path d="M6 0.5V7.5L1.5 4z" fill="#8a8a8a"/></svg>
<div class="grid"><div class="cell" style="left:0px;top:-10px;background:#f5a50c">1</div><div class="cell" style="left:20px;top:-10px;background:#f03c0a">2</div><div class="cell" style="left:40px;top:-10px;background:#f7fadf">3</div><div class="cell" style="left:60px;top:-10px;background:#a9ab8d">4</div><div class="cell" style="left:80px;top:-10px;background:#b26fd8">5</div><div class="cell" style="left:100px;top:-10px;background:#5b8fd8">6</div><div class="cell" style="left:120px;top:-10px;background:#4ccc10">7</div><div class="cell" style="left:140px;top:-10px;background:#f2f20c">8</div><div class="cell" style="left:160px;top:-10px;background:#f5a50c">9</div><div class="cell" style="left:180px;top:-10px;background:#f03c0a">10</div><div class="cell" style="left:0px;top:10px;background:#f2f20c">1</div><div class="cell" style="left:20px;top:10px;background:#f5a50c">2</div><div class="cell" style="left:40px;top:10px;background:#f03c0a">3</div><div class="cell" style="left:60px;top:10px;background:#f7fadf">4</div><div class="cell" style="left:80px;top:10px;background:#a9ab8d">5</div><div class="cell" style="left:100px;top:10px;background:#b26fd8">6</div><div class="cell" style="left:120px;top:10px;background:#5b8fd8">7</div><div class="cell" style="left:140px;top:10px;background:#4ccc10">8</div><div class="cell" style="left:160px;top:10px;background:#f2f20c">9</div><div class="cell" style="left:180px;top:10px;background:#f5a50c">10</div><div class="cell" style="left:0px;top:30px;background:#4ccc10">1</div><div class="cell" style="left:20px;top:30px;background:#f2f20c">2</div><div class="cell" style="left:40px;top:30px;background:#f5a50c">3</div><div class="cell" style="left:60px;top:30px;background:#f03c0a">4</div><div class="cell" style="left:80px;top:30px;background:#f7fadf">5</div><div class="cell" style="left:100px;top:30px;background:#a9ab8d">6</div><div class="cell" style="left:120px;top:30px;background:#b26fd8">7</div><div class="cell" style="left:140px;top:30px;background:#5b8fd8">8</div><div class="cell" style="left:160px;top:30px;background:#4ccc10">9</div><div class="cell" style="left:180px;top:30px;background:#f2f20c">10</div><div class="cell" style="left:0px;top:50px;background:#5b8fd8">1</div><div class="cell" style="left:20px;top:50px;background:#4ccc10">2</div><div class="cell" style="left:40px;top:50px;background:#f2f20c">3</div><div class="cell" style="left:60px;top:50px;background:#f5a50c">4</div><div class="cell" style="left:80px;top:50px;background:#f03c0a">5</div><div class="cell" style="left:100px;top:50px;background:#f7fadf">6</div><div class="cell" style="left:120px;top:50px;background:#a9ab8d">7</div><div class="cell" style="left:140px;top:50px;background:#b26fd8">8</div><div class="cell" style="left:160px;top:50px;background:#5b8fd8">9</div><div class="cell" style="left:180px;top:50px;background:#4ccc10">10</div><div class="cell" style="left:0px;top:70px;background:#b26fd8">1</div><div class="cell" style="left:20px;top:70px;background:#5b8fd8">2</div><div class="cell" style="left:40px;top:70px;background:#4ccc10">3</div><div class="cell" style="left:60px;top:70px;background:#f2f20c">4</div><div class="cell" style="left:80px;top:70px;background:#f5a50c">5</div><div class="cell" style="left:100px;top:70px;background:#f03c0a">6</div><div class="cell" style="left:120px;top:70px;background:#f7fadf">7</div><div class="cell" style="left:140px;top:70px;background:#a9ab8d">8</div><div class="cell" style="left:160px;top:70px;background:#b26fd8">9</div><div class="cell" style="left:180px;top:70px;background:#5b8fd8">10</div><div class="cell" style="left:0px;top:90px;background:#a9ab8d">1</div><div class="cell" style="left:20px;top:90px;background:#b26fd8">2</div><div class="cell" style="left:40px;top:90px;background:#5b8fd8">3</div><div class="cell" style="left:60px;top:90px;background:#4ccc10">4</div><div class="cell" style="left:80px;top:90px;background:#f2f20c">5</div><div class="cell" style="left:100px;top:90px;background:#f5a50c">6</div><div class="cell" style="left:120px;top:90px;background:#f03c0a">7</div><div class="cell" style="left:140px;top:90px;background:#f7fadf">8</div><div class="cell" style="left:160px;top:90px;background:#a9ab8d">9</div><div class="cell" style="left:180px;top:90px;background:#b26fd8">10</div></div>

<!-- ============ ACTIVITY ============ -->
<div class="strip" style="left:746px;top:744px;width:301px;height:21px;background:#1c1c1c"></div>
<div class="panel" style="left:746px;top:765px;width:301px;height:79px"></div>
<svg class="a" style="left:754px;top:747px" width="17" height="14" viewBox="0 0 17 14"><g fill="none" stroke="#e0e0e0" stroke-width="1.4"><path d="M8 1.8V4.3H3.5V7M13.5 6.5V7"/><rect x="0.7" y="7.5" width="6" height="5.8"/><rect x="9.5" y="7.5" width="6.3" height="5.8"/></g><rect x="4" y="0.5" width="8" height="2.2" fill="#e0e0e0"/><rect x="2.5" y="9.5" width="2.5" height="1.5" fill="#e0e0e0"/><rect x="10" y="4.5" width="1.2" height="1.2" fill="#e0e0e0"/><rect x="12.5" y="4.5" width="1.2" height="1.2" fill="#e0e0e0"/></svg>
<div class="t" style="left:776px;top:748px;color:#dadada;letter-spacing:-0.2px">Activity Browser: FP3</div>
<div class="x" style="left:893px;top:752px;background:transparent"></div>
<svg class="a" style="left:917px;top:747px" width="11" height="12" viewBox="0 0 11 12"><path d="M5.5 0.5L8.5 5.5H2.5z" fill="#e0e0e0"/><circle cx="2.5" cy="9" r="2.2" fill="#e0e0e0"/><rect x="6" y="6.8" width="4.5" height="4.5" fill="#e0e0e0"/></svg>
<div class="t" style="left:936px;top:748px;color:#dadada;letter-spacing:-0.2px">Assets</div>
<div class="x" style="left:976px;top:752px;background:transparent"></div>
<svg class="a" style="left:999px;top:746px" width="15" height="15" viewBox="0 0 15 15"><path d="M0.5 1H6L7 2.3H14.5V3.3H0.5z" fill="#e0e0e0"/><rect x="0.5" y="4.3" width="14" height="10.2" fill="#e0e0e0"/><path d="M7.5 5.3L9.8 8.8H5.2z" fill="#222"/><circle cx="5.4" cy="11.5" r="1.6" fill="#222"/><rect x="8.3" y="10" width="3" height="3" fill="#222"/></svg>
<div class="t" style="left:1020px;top:748px;color:#dadada;letter-spacing:-0.2px">Assets</div>
<div class="a" style="left:746px;top:805px;width:301px;height:39px;background:#222"></div>
<div class="a" style="left:949px;top:808px;width:1px;height:36px;background:#3a3a3a"></div>
<div class="a" style="left:753px;top:776px;width:130px;height:22px;background:#3a3a3a;border:1px solid #333;border-radius:3px"></div>
<div class="t" style="left:766px;top:780px;color:#7d7d7d;font-size:12.5px;letter-spacing:-0.1px;-webkit-text-stroke:0.35px currentColor">Edit State Manager</div>
<div class="a" style="left:894px;top:775px;width:1px;height:24px;background:#3a3a3a"></div>
<div class="a" style="left:906px;top:776px;width:121px;height:22px;background:#2a2a2a;border:1px solid #232323;border-radius:3px"></div>
<svg class="a" style="left:911px;top:779px" width="17" height="17" viewBox="0 0 17 17"><g fill="none" stroke="#8a8a8a" stroke-width="1.2"><rect x="0.6" y="0.6" width="15.8" height="15.8"/><path d="M3 7.5H8.5V5H14V11H8.5V13.5H3z"/></g><rect x="11" y="2" width="3.5" height="1.2" fill="#8a8a8a"/></svg>
<div class="t" style="left:932px;top:781px;color:#8a8a8a;font-size:12.5px;letter-spacing:-0.1px;-webkit-text-stroke:0.35px currentColor">Transition Editor</div>
<div class="a" style="left:1038px;top:775px;width:1px;height:24px;background:#3a3a3a"></div>



</body></html>
